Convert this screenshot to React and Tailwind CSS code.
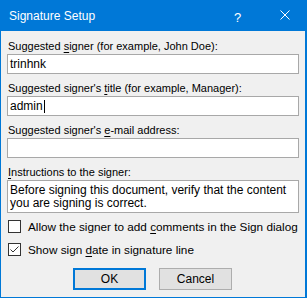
import React from "react";

const font = { fontFamily: '"Liberation Sans", Arial, sans-serif' };

function Field({ children, value, cursor }) {
  return (
    <div className="flex flex-col mb-[7px]">
      <div className="h-[15px] leading-[15px] text-[11px] text-black pl-[1px] whitespace-nowrap">{children}</div>
      <div className="h-[20px] bg-white border border-[#a8a8a8] flex items-center pl-[2px] text-[12px] text-black leading-[15px]">
        <span>{value}</span>
        {cursor && <span className="inline-block w-[1px] h-[13px] bg-black ml-[1px]" />}
      </div>
    </div>
  );
}

function Check({ checked, children }) {
  return (
    <div className="flex items-center h-[13px] pl-[1px]">
      <div className="w-[13px] h-[13px] shrink-0 border border-[#333333] bg-white flex items-center justify-center">
        {checked && (
          <svg width="11" height="11" viewBox="0 0 11 11">
            <path d="M1.5 5.5 L4 8 L9.5 2.5" fill="none" stroke="#333333" strokeWidth="1" />
          </svg>
        )}
      </div>
      <span className="ml-[7px] text-[11.75px] leading-[15px] text-black whitespace-nowrap">{children}</span>
    </div>
  );
}

export default function App() {
  return (
    <div className="w-[307px] h-[298px] bg-[#0078d7] flex flex-col" style={font}>
      <div className="h-[31px] flex items-center text-white text-[12px] relative">
        <span className="ml-[9px]">Signature Setup</span>
        <span className="absolute left-[234px] top-[8px] text-[13px]">?</span>
        <svg className="absolute left-[280px] top-[10px]" width="10" height="10" viewBox="0 0 10 10">
          <path d="M0.5 0.5 L9.5 9.5 M9.5 0.5 L0.5 9.5" stroke="white" strokeWidth="1" />
        </svg>
      </div>
      <div className="flex-1 ml-[1px] mr-[2px] mb-[1px] bg-[#f0f0f0] px-[6px] pt-[8px] flex flex-col">
        <Field value="trinhnk">
          Suggested <u className="underline-offset-2">s</u>igner (for example, John Doe):
        </Field>
        <Field value="admin" cursor>
          Suggested signer's <u className="underline-offset-2">t</u>itle (for example, Manager):
        </Field>
        <Field value="">
          Suggested signer's <u className="underline-offset-2">e</u>-mail address:
        </Field>
        <div className="flex flex-col">
          <div className="h-[15px] leading-[15px] text-[11px] text-black pl-[1px]">
            <u className="underline-offset-2">I</u>nstructions to the signer:
          </div>
          <div className="h-[33px] bg-white border border-[#a8a8a8] pl-[2px] pt-[3px] text-[12px] leading-[13px] text-black whitespace-nowrap">
            Before signing this document, verify that the content
            <br />
            you are signing is correct.
          </div>
        </div>
        <div className="mt-[7px] flex flex-col gap-[10px]">
          <Check>
            Allow the signer to add <u className="underline-offset-2">c</u>omments in the Sign dialog
          </Check>
          <Check checked>
            Show sign <u className="underline-offset-2">d</u>ate in signature line
          </Check>
        </div>
        <div className="mt-[12px] flex justify-center gap-[13px] pr-[1px]">
          <button className="w-[73px] h-[22px] bg-[#e1e1e1] border-2 border-[#0078d7] text-[12px] text-black">
            OK
          </button>
          <button className="w-[73px] h-[22px] bg-[#e1e1e1] border border-[#adadad] text-[12px] text-black">
            Cancel
          </button>
        </div>
      </div>
    </div>
  );
}
